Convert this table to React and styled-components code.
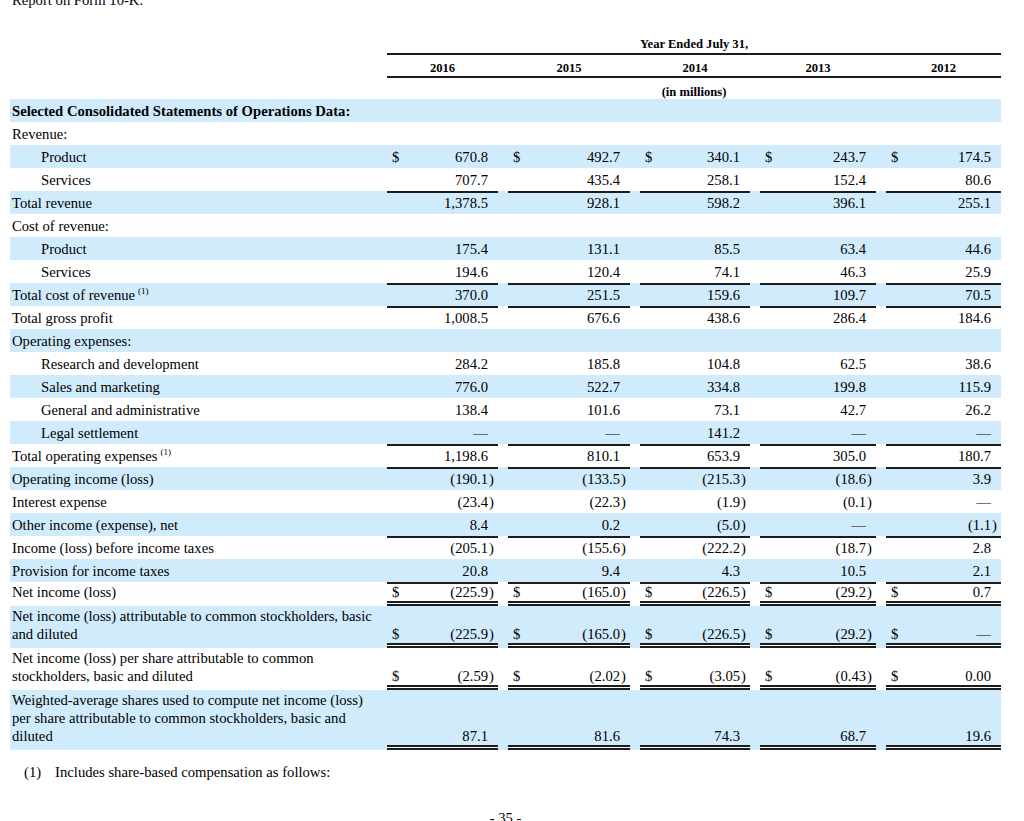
import React from 'react';
import styled, { createGlobalStyle } from 'styled-components';

const BLUE = '#cfebfc';
const INK = '#1c1c1c';

const GlobalStyle = createGlobalStyle`
  html, body {
    margin: 0;
    background: #fff;
  }
  body {
    font-family: "Liberation Serif", "Times New Roman", serif;
    font-size: 14.67px;
    color: #000;
    overflow: hidden;
  }
`;

const years = ['2016', '2015', '2014', '2013', '2012'];

const rows = [
  { label: 'Selected Consolidated Statements of Operations Data:', bold: true, shade: true },
  { label: 'Revenue:' },
  { label: 'Product', indent: true, shade: true, dollar: true, values: ['670.8', '492.7', '340.1', '243.7', '174.5'] },
  { label: 'Services', indent: true, values: ['707.7', '435.4', '258.1', '152.4', '80.6'] },
  { label: 'Total revenue', shade: true, top: true, values: ['1,378.5', '928.1', '598.2', '396.1', '255.1'] },
  { label: 'Cost of revenue:' },
  { label: 'Product', indent: true, shade: true, values: ['175.4', '131.1', '85.5', '63.4', '44.6'] },
  { label: 'Services', indent: true, values: ['194.6', '120.4', '74.1', '46.3', '25.9'] },
  { label: 'Total cost of revenue', note: true, shade: true, top: true, values: ['370.0', '251.5', '159.6', '109.7', '70.5'] },
  { label: 'Total gross profit', top: true, values: ['1,008.5', '676.6', '438.6', '286.4', '184.6'] },
  { label: 'Operating expenses:', shade: true },
  { label: 'Research and development', indent: true, values: ['284.2', '185.8', '104.8', '62.5', '38.6'] },
  { label: 'Sales and marketing', indent: true, shade: true, values: ['776.0', '522.7', '334.8', '199.8', '115.9'] },
  { label: 'General and administrative', indent: true, values: ['138.4', '101.6', '73.1', '42.7', '26.2'] },
  { label: 'Legal settlement', indent: true, shade: true, values: ['—', '—', '141.2', '—', '—'] },
  { label: 'Total operating expenses', note: true, top: true, values: ['1,198.6', '810.1', '653.9', '305.0', '180.7'] },
  { label: 'Operating income (loss)', shade: true, top: true, values: ['(190.1)', '(133.5)', '(215.3)', '(18.6)', '3.9'] },
  { label: 'Interest expense', values: ['(23.4)', '(22.3)', '(1.9)', '(0.1)', '—'] },
  { label: 'Other income (expense), net', shade: true, values: ['8.4', '0.2', '(5.0)', '—', '(1.1)'] },
  { label: 'Income (loss) before income taxes', top: true, values: ['(205.1)', '(155.6)', '(222.2)', '(18.7)', '2.8'] },
  { label: 'Provision for income taxes', shade: true, values: ['20.8', '9.4', '4.3', '10.5', '2.1'] },
  { label: 'Net income (loss)', top: true, double: true, dollar: true, values: ['(225.9)', '(165.0)', '(226.5)', '(29.2)', '0.7'] },
  {
    label: 'Net income (loss) attributable to common stockholders, basic and diluted',
    shade: true, double: true, dollar: true,
    values: ['(225.9)', '(165.0)', '(226.5)', '(29.2)', '—'],
  },
  {
    label: 'Net income (loss) per share attributable to common stockholders, basic and diluted',
    double: true, dollar: true,
    values: ['(2.59)', '(2.02)', '(3.05)', '(0.43)', '0.00'],
  },
  {
    label: 'Weighted-average shares used to compute net income (loss) per share attributable to common stockholders, basic and diluted',
    shade: true, double: true,
    values: ['87.1', '81.6', '74.3', '68.7', '19.6'],
  },
];

const Page = styled.div`
  width: 991px;
  padding-left: 10px;
`;

const Intro = styled.p`
  margin: -8px 0 0;
  padding-left: 2px;
  line-height: 17px;
`;

const Header = styled.div`
  display: grid;
  grid-template-columns: 367px 1fr;
  column-gap: 10px;
  margin-top: 27px;
  font-size: 12.6px;
  font-weight: bold;
`;

const HeaderRight = styled.div`
  grid-column: 2;
`;

const Caption = styled.div`
  line-height: 17px;
  text-align: center;
`;

const YearsRow = styled.div`
  display: grid;
  grid-template-columns: 111px 122px 110px 116px 115px;
  column-gap: 10px;
  align-items: end;
  box-sizing: border-box;
  height: 25px;
  border-top: 2px solid ${INK};
  border-bottom: 2px solid ${INK};
`;

const Year = styled.div`
  text-align: center;
  line-height: 15px;
`;

const Units = styled.div`
  box-sizing: border-box;
  height: 21px;
  padding-top: 6.5px;
  line-height: 15px;
  text-align: center;
`;

const Row = styled.div`
  display: grid;
  grid-template-columns: 367px 111px 122px 110px 116px 115px;
  column-gap: 10px;
  background: ${(p) => (p.$shade ? BLUE : 'transparent')};
`;

const Label = styled.div`
  padding: ${(p) => (p.$double ? '1px 0 5px' : '2.5px 0')};
  padding-left: ${(p) => (p.$indent ? '31px' : '2px')};
  line-height: 18px;
  font-weight: ${(p) => (p.$bold ? 'bold' : 'normal')};
`;

const shadows = (p) => {
  const list = [];
  if (p.$top) list.push(`inset 0 2px 0 ${INK}`);
  if (p.$double) {
    list.push(`inset 0 -2px 0 ${INK}`, 'inset 0 -3px 0 #fff', `inset 0 -5px 0 ${INK}`);
  }
  return list.length ? list.join(', ') : 'none';
};

const Value = styled.div`
  display: flex;
  justify-content: space-between;
  align-items: flex-end;
  padding: ${(p) => (p.$double ? '1px 10px 5px 5px' : '2.5px 10px 2.5px 5px')};
  line-height: 18px;
  box-shadow: ${shadows};
`;

const Dollar = styled.span`
  visibility: ${(p) => (p.$show ? 'visible' : 'hidden')};
`;

const Amount = styled.span`
  white-space: nowrap;
`;

const Paren = styled.span`
  margin-left: 1px;
  margin-right: -6px;
`;

const Note = styled.sup`
  font-size: 9px;
  vertical-align: 6px;
  line-height: 0;
  margin-left: 3px;
`;

const Footnote = styled.div`
  display: flex;
  gap: 14px;
  margin-top: 14px;
  padding-left: 14px;
  line-height: 17px;
`;

const PageNumber = styled.div`
  margin-top: 29px;
  line-height: 17px;
  text-align: center;
`;

const formatValue = (v) =>
  v.endsWith(')') ? (
    <>
      {v.slice(0, -1)}
      <Paren>)</Paren>
    </>
  ) : (
    v
  );

const App = () => (
  <>
    <GlobalStyle />
    <Page>
      <Intro>Report on Form 10-K.</Intro>

      <Header>
        <HeaderRight>
          <Caption>Year Ended July 31,</Caption>
          <YearsRow>
            {years.map((y) => (
              <Year key={y}>{y}</Year>
            ))}
          </YearsRow>
          <Units>(in millions)</Units>
        </HeaderRight>
      </Header>

      {rows.map((r, i) => (
        <Row key={i} $shade={r.shade}>
          <Label $indent={r.indent} $bold={r.bold} $double={r.double}>
            {r.label}
            {r.note && <Note>(1)</Note>}
          </Label>
          {years.map((y, j) => (
            <Value key={y} $top={r.values && r.top} $double={r.values && r.double}>
              {r.values && (
                <>
                  <Dollar $show={r.dollar}>$</Dollar>
                  <Amount>{formatValue(r.values[j])}</Amount>
                </>
              )}
            </Value>
          ))}
        </Row>
      ))}

      <Footnote>
        <span>(1)</span>
        <span>Includes share-based compensation as follows:</span>
      </Footnote>
      <PageNumber>- 35 -</PageNumber>
    </Page>
  </>
);

export default App;
